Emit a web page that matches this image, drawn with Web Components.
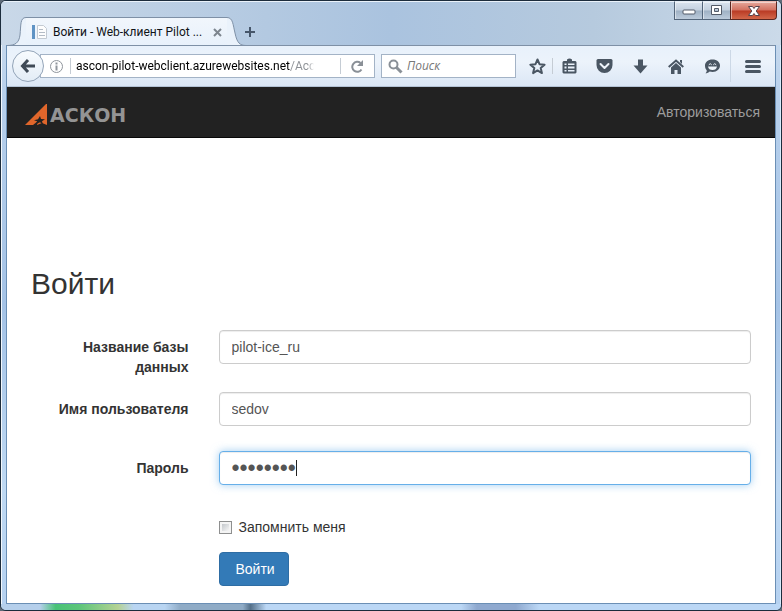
<!DOCTYPE html>
<html lang="ru">
<head>
<meta charset="utf-8">
<meta name="viewport" content="width=device-width, initial-scale=1">
<title>Войти - Web-клиент Pilot</title>
<style>
  :root {
    --chrome-font: Roboto, "Open Sans", sans-serif;
    --page-font: "Liberation Sans", Arial, sans-serif;
    --chrome-icon: #4a5663;
    --chrome-line: #a3b3c6;
    --accent: #337ab7;
  }

  body {
    margin: 0;
    background: #5f6b78;
    font-family: var(--page-font);
    font-size: 14px;
    line-height: 20px;
    color: #333;
  }
</style>
</head>
<body>
<app-window>
  <browser-tab slot="tabs">Войти - Web-клиент Pilot ...</browser-tab>
  <browser-toolbar slot="toolbar" url="ascon-pilot-webclient.azurewebsites.net/Account"></browser-toolbar>
  <site-navbar>
    <site-logo slot="brand"></site-logo>
    <nav-link href="#login">Авторизоваться</nav-link>
  </site-navbar>
  <login-form heading="Войти">
    <form-field label="Название базы данных" name="database" value="pilot-ice_ru"></form-field>
    <form-field label="Имя пользователя" name="user" value="sedov"></form-field>
    <form-field label="Пароль" name="password" type="password" value="password" active></form-field>
    <check-field slot="remember">Запомнить меня</check-field>
    <submit-button slot="actions">Войти</submit-button>
  </login-form>
</app-window>

<script>
const define = (tagName, html, setup) => {
  const template = document.createElement("template");
  template.innerHTML = `<style>:host, *, *::before, *::after { box-sizing: border-box; }</style>${html}`;

  customElements.define(
    tagName,
    class extends HTMLElement {
      constructor() {
        super();
        this.attachShadow({ mode: "open" }).append(template.content.cloneNode(true));
      }

      connectedCallback() {
        setup?.(this, this.shadowRoot);
      }
    },
  );
};

define("window-controls", `
  <style>
    :host { display: flex; align-self: flex-start; }

    button {
      display: grid;
      place-items: center;
      width: 28px;
      height: 19px;
      margin: 0;
      padding: 0;
      border: 1px solid #53657a;
      border-top-color: #e4edf6;
      border-right-width: 0;
      background: linear-gradient(#d9e3ee, #c3d0de 48%, #9fb1c4 52%, #bccbdb);
      box-shadow: inset 1px 1px 0 #ffffff80;
    }

    button:first-child { border-bottom-left-radius: 4px; }

    .close {
      width: 47px;
      border-right-width: 1px;
      border-color: #5a2620;
      border-top-color: #e9b9b0;
      border-bottom-right-radius: 4px;
      background: linear-gradient(#e5a79b, #d2705f 48%, #b93a24 52%, #d2674a);
    }
  </style>
  <button type="button" aria-label="Свернуть">
    <svg width="14" height="8"><rect x="1" y="3" width="12" height="4" rx="1" fill="#fff" stroke="#535b68"/></svg>
  </button>
  <button type="button" aria-label="Развернуть">
    <svg width="13" height="11"><path fill="#fff" fill-rule="evenodd" stroke="#535b68" d="M1.5.5h10v9h-10zM4.500 3.500h4v3h-4z"/></svg>
  </button>
  <button type="button" class="close" aria-label="Закрыть">
    <svg width="14" height="12"><path fill="#fff" stroke="#54424a" stroke-linejoin="round" d="M1.500 1.500h4L7 3.500l1.500-2h4L9.200 6l3.300 4.500h-4L7 8.500l-1.500 2h-4L4.800 6z"/></svg>
  </button>
`);

define("browser-tab", `
  <style>
    :host {
      display: flex;
      align-self: flex-end;
      height: 29px;
      margin-bottom: -1px;
      font: 12px/28px var(--chrome-font);
      color: #101418;
    }

    .edge { flex: none; display: block; }

    .body {
      display: flex;
      align-items: center;
      width: 201px;
      padding-left: 6px;
      border-top: 1px solid #7e90a6;
      background: linear-gradient(#f1f6fc, #e8f1fb);
    }

    .favicon { flex: none; margin-right: 6px; }
    .title { flex: 1; white-space: nowrap; }

    button {
      display: grid;
      place-items: center;
      width: 20px;
      height: 20px;
      padding: 0;
      border: 0;
      background: none;
    }
  </style>
  <svg class="edge" width="19" height="29">
    <path fill="#eaf2fb" d="M0 29C8 29 12 26 13 18C14 8 13 .5 19 .5V29z"/>
    <path fill="none" stroke="#7e90a6" d="M0 28.500C8 28.500 12 26 13 18C14 8 13 .5 19 .5"/>
  </svg>
  <div class="body">
    <svg class="favicon" width="15" height="16">
      <path fill="#5f93c4" d="M0 1h3v14H0z"/>
      <path fill="#fdfdfd" stroke="#c3cad2" d="M5.500 1.500h6l3 3v10h-9z"/>
      <path fill="none" stroke="#b4bcc6" d="M7 5.500h4M7 8.500h6M7 11.500h6"/>
    </svg>
    <span class="title"><slot></slot></span>
    <button type="button" aria-label="Закрыть вкладку">
      <svg width="9" height="9"><path stroke="#7d858e" stroke-width="2" d="M1 1l7 7M8 1L1 8"/></svg>
    </button>
  </div>
  <svg class="edge" width="19" height="29">
    <path fill="#eaf2fb" d="M0 .5C6 .5 6 8 8 16C10 26 13 28.500 19 28.500V29H0z"/>
    <path fill="none" stroke="#7e90a6" d="M0 .5C6 .5 6 8 8 16C10 26 13 28.500 19 28.500"/>
  </svg>
`);

define("tool-button", `
  <style>
    :host { display: block; flex: none; width: 36px; color: var(--chrome-icon); }

    button {
      display: grid;
      place-items: center;
      width: 100%;
      height: 24px;
      padding: 0;
      border: 0;
      background: none;
      color: inherit;
    }
  </style>
  <button type="button"><slot></slot></button>
`, (host, shadow) => {
  shadow.querySelector("button").setAttribute("aria-label", host.getAttribute("label"));
});

define("browser-toolbar", `
  <style>
    :host {
      display: flex;
      align-items: center;
      height: 42px;
      padding-left: 5px;
      border-top: 1px solid #7e90a6;
      border-bottom: 1px solid #b4c3d5;
      background: linear-gradient(#e8f1fb, #ecf3fb 40%, #dbe7f5);
    }

    .back {
      display: grid;
      place-items: center;
      flex: none;
      z-index: 1;
      width: 32px;
      height: 32px;
      margin-right: -4px;
      padding: 0;
      border: 1px solid #93a4b8;
      border-radius: 50%;
      background: linear-gradient(#f8fbfe, #e3ecf6);
      color: #3f4a56;
    }

    .box {
      display: flex;
      align-items: center;
      height: 24px;
      border: 1px solid var(--chrome-line);
      background: #fff;
    }

    .address { flex: 1; min-width: 0; padding-left: 8px; }
    .search { width: 135px; margin-left: 6px; padding-left: 6px; }

    .divider { flex: none; width: 1px; height: 16px; background: #c5ccd4; }
    .tall { height: 32px; background: #ccd8e6; }

    input {
      min-width: 0;
      flex: 1;
      margin: 0 0 0 5px;
      padding: 0;
      border: 0;
      outline: 0;
      background: none;
      font: 12px/20px var(--chrome-font);
    }

    /* host name in black, path greyed and faded at the end of the box */
    .url {
      margin-right: 26px;
      background: linear-gradient(90deg, #000 214px, #8b8f94 214px, #8b8f94 calc(100% - 6px), transparent);
      -webkit-background-clip: text;
      background-clip: text;
      color: transparent;
    }

    .search input { margin-left: 4px; font-family: "Open Sans", sans-serif; font-style: italic; }
    .search input::placeholder { color: #777; opacity: 1; }

    .narrow { width: 33px; }
    .star { width: 30px; margin-left: 6px; }
    .menu { width: 44px; }
  </style>
  <button type="button" class="back" aria-label="Назад">
    <svg width="16" height="14"><path fill="none" stroke="currentColor" stroke-width="3" d="M8 1L2.500 7L8 13M3 7h12"/></svg>
  </button>
  <div class="box address">
    <svg width="15" height="15" style="flex:none">
      <circle cx="7.500" cy="7.500" r="6" fill="none" stroke="#8f959c"/>
      <path stroke="#8f959c" stroke-width="2" d="M7.500 3.500v2M7.500 6.500v5"/>
    </svg>
    <span class="divider" style="margin-left:6px"></span>
    <input class="url" type="text" aria-label="Адрес">
    <span class="divider"></span>
    <tool-button class="narrow" label="Обновить">
      <svg width="13" height="13"><path fill="none" stroke="#8a9097" stroke-width="2" d="M10.500 9.500A5 5 0 1 1 9.500 3"/><path fill="#8a9097" d="M12 0v6H6z"/></svg>
    </tool-button>
  </div>
  <div class="box search">
    <svg width="15" height="15" style="flex:none"><circle cx="5.500" cy="5.500" r="4" fill="none" stroke="#8a9097" stroke-width="2"/><path stroke="#8a9097" stroke-width="3" d="M8.500 8.500l5 5"/></svg>
    <input type="search" placeholder="Поиск" aria-label="Поиск">
  </div>
  <tool-button class="star" label="Добавить в закладки">
    <svg width="17" height="17"><path fill="none" stroke="currentColor" stroke-width="2" stroke-linejoin="round" d="M8.500 1.500l2 4.700 5.100.500-3.900 3.400 1.200 5-4.400-2.700-4.400 2.700 1.200-5L1.400 6.700l5.100-.5z"/></svg>
  </tool-button>
  <span class="divider"></span>
  <tool-button class="narrow" label="Закладки">
    <svg width="15" height="16"><path fill="currentColor" fill-rule="evenodd" d="M5 1.500Q7.500-.5 10 1.500V3h3.500L14.500 4v10.500l-1 1h-12l-1-1V4l1-1H5zM2.500 5.500v1.500h2V5.500zM6 5.500v1.500h6.500V5.500zM2.500 8.500v2h2v-2zM6 8.500v2h6.500v-2zM2.500 12v1.500h2V12zM6 12v1.500h6.500V12z"/></svg>
  </tool-button>
  <tool-button label="Pocket">
    <svg width="17" height="15"><path fill="currentColor" d="M2 0h13q1.500 0 1.500 1.500V6a8 8 0 0 1-16 0V1.500Q.5 0 2 0z"/><path fill="none" stroke="#eef4fb" stroke-width="2" stroke-linecap="round" stroke-linejoin="round" d="M4.500 5l4 4 4-4"/></svg>
  </tool-button>
  <tool-button label="Загрузки">
    <svg width="15" height="15"><path fill="currentColor" d="M5 .5h5v6h4.500L7.500 14.500.5 6.500H5z"/></svg>
  </tool-button>
  <tool-button label="Домашняя страница">
    <svg width="16" height="15"><path fill="none" stroke="currentColor" stroke-width="2" d="M.7 8L8 1.500 15.300 8"/><path fill="currentColor" d="M12 1h2v4l-2-2zM8 4l5 4.500V15H9.500v-4h-3v4H3V8.500z"/></svg>
  </tool-button>
  <tool-button label="Firefox Hello">
    <svg width="17" height="15"><path fill="currentColor" d="M8.500.5c4.500 0 7.500 2.700 7.500 6s-3 6.500-7.500 6.500c-1 0-2-.1-2.800-.4C4.500 14 2.500 14.500 1.500 14.300c1-.8 1.300-1.800 1.200-3C1.500 10 1 8.500 1 6.500c0-3.300 3-6 7.500-6z"/><path fill="none" stroke="#eef4fb" stroke-linecap="round" d="M5 5.500q1.200-2 2.500 0M9.500 5.500q1.200-2 2.500 0"/><path fill="#eef4fb" d="M4 7.500h9q-.6 3.500-4.500 3.500T4 7.500z"/></svg>
  </tool-button>
  <span class="divider tall"></span>
  <tool-button class="menu" label="Меню">
    <svg width="16" height="13"><path stroke="currentColor" stroke-width="3" stroke-linecap="round" d="M1.500 1.500h13M1.500 6.500h13M1.500 11.500h13"/></svg>
  </tool-button>
`, (host, shadow) => {
  shadow.querySelector(".url").value = host.getAttribute("url");
});

define("app-window", `
  <style>
    :host {
      display: flex;
      flex-direction: column;
      min-height: 100vh;
      border: 1px solid #1c2c3c;
      border-radius: 6px;
      overflow: hidden;
      background: linear-gradient(#d0deed, #b7d0ec 16%, #a5c3e6 50%, #bfd9f3 80%, #b5d1f0);
      box-shadow: inset 1px 1px 0 #f3f8fd, inset -1px -1px 0 #d8ebfb;
    }

    .tabs {
      display: flex;
      align-items: flex-end;
      height: 44px;
      padding: 0 4px 0 6px;
      background: linear-gradient(90deg, #c9d8e8 0, #b3c9e1 34%, #aac3df 50%, #b6cade 76%, #cbdae9 100%);
      box-shadow: inset 0 1px 0 #eaf2fa;
    }

    .new-tab {
      display: grid;
      place-items: center;
      width: 22px;
      height: 27px;
      margin-left: -7px;
      padding: 0;
      border: 0;
      background: none;
    }

    window-controls { margin-left: auto; }

    .frame {
      display: flex;
      flex: 1;
      flex-direction: column;
      margin: 0 5px;
      border: solid #6b8fb5;
      border-width: 0 1px 1px;
      background: #fff;
    }

    .bottom {
      height: 6px;
      background: linear-gradient(90deg, #b5cfeb 5%, #48c277 7%, #5cc57a 10%, #b4d294 15%, #b9d5f2 17%, #b9d5f2 21%, #8fabc6 23%, #8fabc6 31%, #557089 32%, #bbd7f5 34%, #bbd7f5 59%, #8fa9cf 61%, #8fa9cf 66%, #bbd7f5 69%);
    }
  </style>
  <div class="tabs">
    <slot name="tabs"></slot>
    <button type="button" class="new-tab" aria-label="Новая вкладка">
      <svg width="12" height="12"><path stroke="#46566a" stroke-width="2" d="M6 1v10M1 6h10"/></svg>
    </button>
    <window-controls></window-controls>
  </div>
  <div class="frame">
    <slot name="toolbar"></slot>
    <slot></slot>
  </div>
  <div class="bottom"></div>
`);

define("site-logo", `
  <style>
    :host { display: block; }

    a {
      display: flex;
      align-items: center;
      gap: 2px;
      color: #949494;
      font: bold 19px/22px "DejaVu Sans", sans-serif;
      text-decoration: none;
    }
  </style>
  <a href="#home">
    <svg width="23" height="22">
      <path fill="#e0662b" d="M0 21L21 0h1v21l-5-2-5 2 1-4-5 4z"/>
      <path fill="#222" d="M15 12l1 3 4 .2-3 2 1 3-3-2-4 2 1-3-3-1 4-1z"/>
    </svg>
    <span>АСКОН</span>
  </a>
`);

define("nav-link", `
  <style>
    :host { display: block; }
    a { display: block; padding: 15px; color: #9d9d9d; text-decoration: none; }
    a:hover { color: #fff; }
  </style>
  <a><slot></slot></a>
`, (host, shadow) => {
  shadow.querySelector("a").href = host.getAttribute("href");
});

define("site-navbar", `
  <style>
    :host { display: block; border-bottom: 1px solid #080808; background: #222; }

    nav {
      display: flex;
      align-items: center;
      justify-content: space-between;
      padding-left: 18px;
    }

    slot[name="brand"]::slotted(*) { margin-top: 6px; }
  </style>
  <nav>
    <slot name="brand"></slot>
    <slot></slot>
  </nav>
`);

define("form-field", `
  <style>
    :host {
      display: grid;
      grid-template-columns: 1fr 3fr;
      align-items: start;
      min-height: 44px;
      margin: 0 -15px 15px;
    }

    label { padding: 7px 15px 0; font-weight: bold; text-align: right; }

    .control { display: grid; position: relative; margin: 0 15px; }

    input {
      width: 100%;
      height: 34px;
      padding: 6px 12px;
      border: 1px solid #ccc;
      border-radius: 4px;
      outline: 0;
      background: #fff;
      box-shadow: inset 0 1px 1px #00000013;
      color: #555;
      font: inherit;
    }

    input[type="password"] { font-size: 23px; }

    input:focus,
    :host([active]) input {
      border-color: #66afe9;
      box-shadow: inset 0 1px 1px #00000013, 0 0 8px #66afe999;
    }

    .caret {
      display: none;
      position: absolute;
      top: 9px;
      left: 77px;
      width: 1px;
      height: 16px;
      background: #222;
    }

    :host([active]) .caret { display: block; }
  </style>
  <label for="control"></label>
  <div class="control">
    <input id="control">
    <span class="caret"></span>
  </div>
`, (host, shadow) => {
  const input = shadow.querySelector("input");

  shadow.querySelector("label").textContent = host.getAttribute("label");
  input.type = host.getAttribute("type") ?? "text";
  input.name = host.getAttribute("name");
  input.value = host.getAttribute("value") ?? "";
});

define("check-field", `
  <style>
    :host { display: block; padding-top: 7px; }
    label { display: flex; align-items: center; gap: 7px; }

    input {
      appearance: none;
      width: 13px;
      height: 13px;
      margin: 1px 0 0;
      border: 1px solid #8e8f8f;
      background: linear-gradient(135deg, #c3c7cb, #f6f6f6) content-box, #f4f4f4;
      padding: 2px;
    }

    input:checked { background: var(--accent) content-box; }
  </style>
  <label><input type="checkbox" name="remember"><span><slot></slot></span></label>
`);

define("submit-button", `
  <style>
    :host { display: block; }

    button {
      height: 34px;
      padding: 0 13px 0 16px;
      border: 1px solid #2e6da4;
      border-radius: 4px;
      background: var(--accent);
      color: #fff;
      font: inherit;
    }

    button:hover { background: #286090; }
  </style>
  <button type="submit"><slot></slot></button>
`);

define("login-form", `
  <style>
    :host { display: block; padding: 129px 24px 17px; }
    h2 { margin: 0 0 30px; font-size: 30px; font-weight: 500; line-height: 33px; }

    .extra {
      display: grid;
      grid-template-columns: 1fr 3fr;
      row-gap: 15px;
      margin: 0 -15px;
    }

    .extra > div { grid-column: 2; margin: 0 15px; }
  </style>
  <h2></h2>
  <form>
    <slot></slot>
    <div class="extra">
      <div><slot name="remember"></slot></div>
      <div><slot name="actions"></slot></div>
    </div>
  </form>
`, (host, shadow) => {
  shadow.querySelector("h2").textContent = host.getAttribute("heading");
});
</script>
</body>
</html>
